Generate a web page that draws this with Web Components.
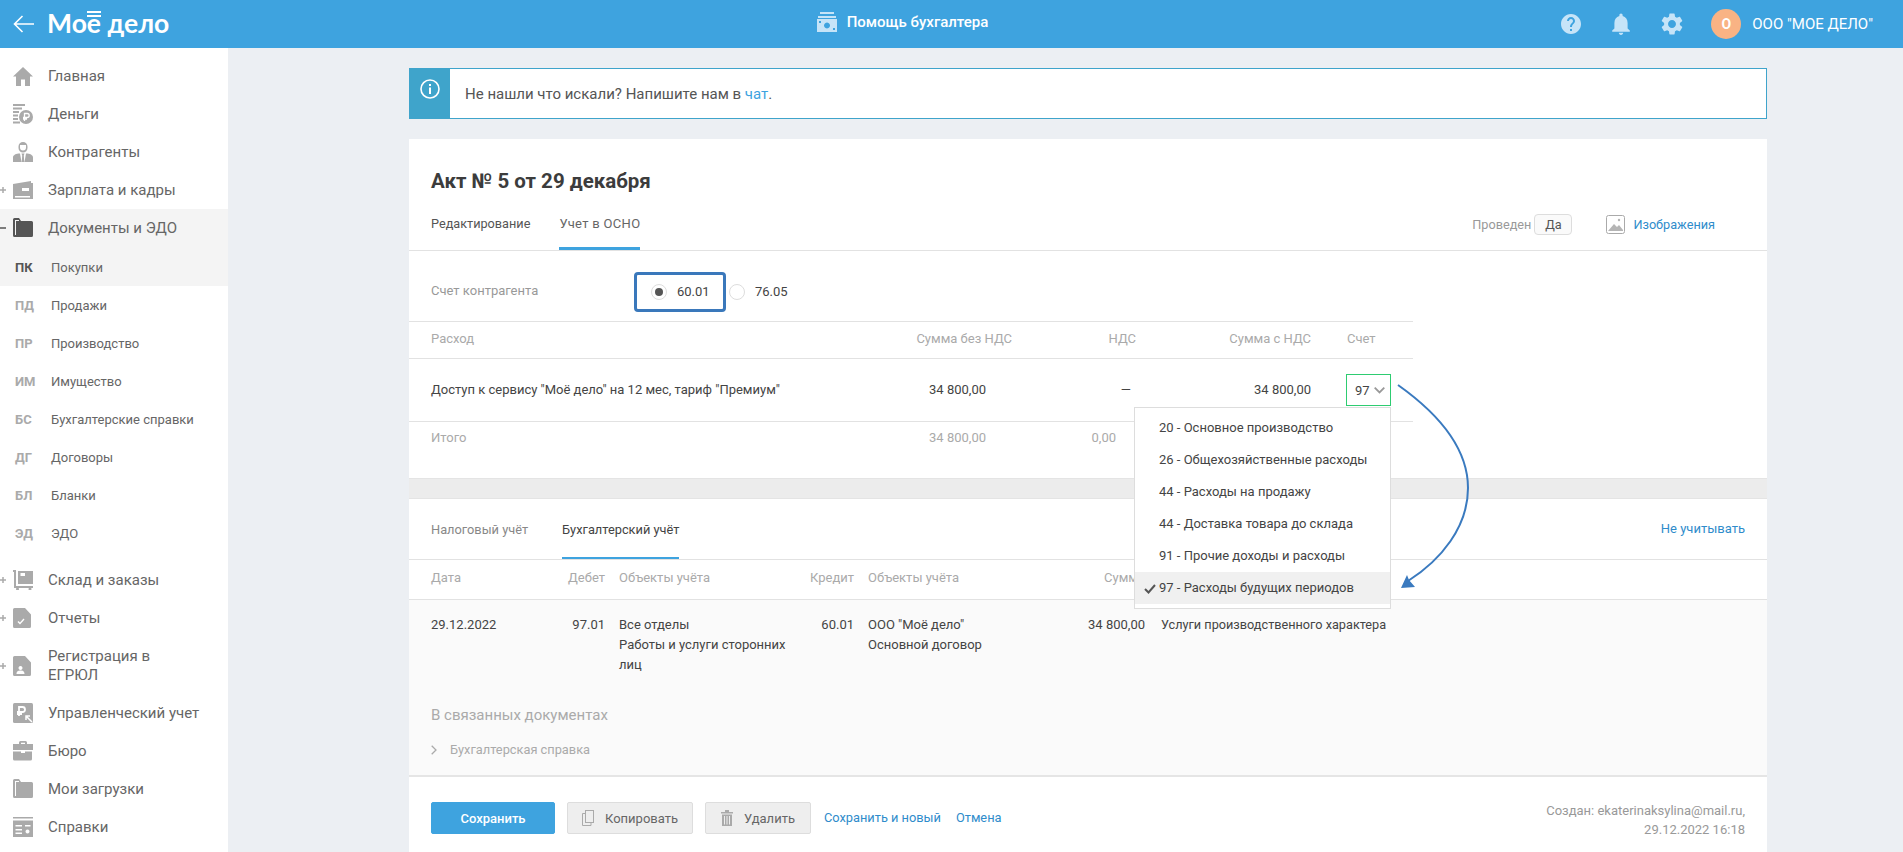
<!DOCTYPE html>
<html lang="ru">
<head>
<meta charset="utf-8">
<title>Акт № 5</title>
<style>
    html, body { margin: 0; height: 100%; overflow: hidden; }
    body { background: #eceff3; font-family: Roboto, "Liberation Sans", sans-serif; }
</style>
</head>
<body>
<app-shell>
    <app-header slot="header"></app-header>
    <side-nav slot="nav">
        <nav-item icon="home">Главная</nav-item>
        <nav-item icon="money">Деньги</nav-item>
        <nav-item icon="person">Контрагенты</nav-item>
        <nav-item icon="wallet" sign="plus">Зарплата и кадры</nav-item>
        <nav-item icon="folder" sign="minus" active>Документы и ЭДО</nav-item>
        <nav-sub abbr="ПК" active style="padding-top:1px">Покупки</nav-sub>
        <nav-sub abbr="ПД">Продажи</nav-sub>
        <nav-sub abbr="ПР">Производство</nav-sub>
        <nav-sub abbr="ИМ">Имущество</nav-sub>
        <nav-sub abbr="БС">Бухгалтерские справки</nav-sub>
        <nav-sub abbr="ДГ">Договоры</nav-sub>
        <nav-sub abbr="БЛ">Бланки</nav-sub>
        <nav-sub abbr="ЭД">ЭДО</nav-sub>
        <nav-item icon="cart" sign="plus" style="margin-top:9px">Склад и заказы</nav-item>
        <nav-item icon="report" sign="plus">Отчеты</nav-item>
        <nav-item icon="reg" sign="plus">Регистрация в<br>ЕГРЮЛ</nav-item>
        <nav-item icon="mgmt">Управленческий учет</nav-item>
        <nav-item icon="bureau">Бюро</nav-item>
        <nav-item icon="folder">Мои загрузки</nav-item>
        <nav-item icon="refs">Справки</nav-item>
    </side-nav>
    <info-alert>Не нашли что искали? Напишите нам в <a>чат</a>.</info-alert>
    <act-card>
        <act-head></act-head>
        <account-row></account-row>
        <expense-table></expense-table>
        <posting-table></posting-table>
        <act-footer></act-footer>
    </act-card>
</app-shell>

<script>
const navIcons = {
    home: '<path d="M10 1 20 10.5H17V20H12V13.5H8V20H3V10.5H0Z"/>',
    money: '<path d="M0 0H12V2H0ZM0 3.5H9V5.5H0ZM0 7H6V9H0ZM0 10.500H5V12.500H0ZM0 14H5V16H0ZM0 17.500H7V19.500H0Z"/><circle cx="13" cy="13" r="7"/><path d="M11.500 17V9.500H14.200A2 2 0 0 1 14.200 13.500H10M10 15H14" fill="none" stroke="#fff" stroke-width="1.300"/>',
    person: '<path d="M10 0A4.500 4.500 0 0 1 14.500 4.500V6A4.500 4.500 0 0 1 5.500 6V4.500A4.500 4.500 0 0 1 10 0ZM7 3V5.500A3 3 0 0 0 13 5.500V3Z" fill-rule="evenodd"/><path d="M0 20V15.500C0 13 3 11.500 7 11.500L8.500 20ZM20 20V15.500C20 13 17 11.500 13 11.500L11.500 20ZM8.500 11.500H11.500L10.800 13.500 11.300 20H8.700L9.200 13.500Z"/>',
    wallet: '<path d="M0 3 18 0V2H20V18H0ZM9 7V10H16V7Z M2 15V16.500H17V15Z" fill-rule="evenodd" transform="translate(0 1)"/>',
    folder: '<path d="M0 1.500Q0 0 1.500 0H6L8 3H18.500Q20 3 20 4.500V17.500Q20 19 18.500 19H1.500Q0 19 0 17.500ZM2 17H3V3H6V2H2Z" fill-rule="evenodd"/>',
    cart: '<path d="M0 0H3V16H20V18H1V2H0Z"/><path d="M5 1H20V14H5ZM7.500 3V6H12V3Z" fill-rule="evenodd"/><circle cx="4.500" cy="19" r="1.500"/><circle cx="17" cy="19" r="1.500"/>',
    report: '<path d="M1.500 0H12L18 6.500V18.500Q18 20 16.500 20H1.500Q0 20 0 18.500V1.500Q0 0 1.500 0ZM4.500 14 7 16.500 11.500 11.500 10.500 10.500 7 14.500 5.500 13Z" fill-rule="evenodd"/>',
    reg: '<path d="M1.500 0H12L18 6.500V18.500Q18 20 16.500 20H1.500Q0 20 0 18.500V1.500Q0 0 1.500 0ZM7.500 10A2 2 0 1 0 7.510 10ZM3.500 18H11.500C11.500 15 9.500 14.500 7.500 14.500S3.500 15 3.500 18Z" fill-rule="evenodd"/>',
    mgmt: '<path d="M1.500 0H18.500Q20 0 20 1.500V18.500Q20 20 18.500 20H1.500Q0 20 0 18.500V1.500Q0 0 1.500 0Z"/><path d="M6 13V4H9.500A2.500 2.500 0 0 1 9.500 9H4M4 11H9" fill="none" stroke="#fff" stroke-width="1.800"/><path d="M19 19 13.500 13.500M13 17V13H17" fill="none" stroke="#fff" stroke-width="1.500"/>',
    bureau: '<path d="M6 3V1.500Q6 0 7.500 0H12.500Q14 0 14 1.500V3H20V9H0V3ZM8 1.800V3H12V1.800Z" fill-rule="evenodd"/><path d="M0 10.500H8V12H12V10.500H19V18Q19 19.500 17.500 19.500H1.500Q0 19.500 0 18Z"/>',
    refs: '<path d="M0 0H20V1.500H0ZM0 3.500H20V20H0ZM2.500 8V9.500H9V8ZM12 8V9.500H17.500V8ZM2.500 12V13.500H9V12ZM2.500 15.500V17H9V15.500ZM14.500 12.500A2 2 0 1 0 14.510 12.500Z" fill-rule="evenodd"/>'
};

const components = [
    {
        name: 'app-shell',
        class: class AppShell extends HTMLElement {
            constructor() {
                super();
                this.attachShadow({ mode: 'open' });
            }
            connectedCallback() {
                this.shadowRoot.innerHTML = `
                    <style>
                        :host {
                            display: grid;
                            grid-template-columns: 228px 1fr;
                            grid-template-rows: 48px 1fr;
                            height: 100vh;
                        }
                        ::slotted([slot="header"]) { grid-column: 1 / 3; }
                        main {
                            padding: 20px 136px 0 181px;
                            display: flex;
                            flex-direction: column;
                            gap: 20px;
                        }
                    </style>
                    <slot name="header"></slot>
                    <slot name="nav"></slot>
                    <main><slot></slot></main>
                `;
            }
        }
    },
    {
        name: 'app-header',
        class: class AppHeader extends HTMLElement {
            constructor() {
                super();
                this.attachShadow({ mode: 'open' });
            }
            connectedCallback() {
                this.shadowRoot.innerHTML = `
                    <style>
                        :host {
                            display: grid;
                            grid-template-columns: 1fr auto 1fr;
                            align-items: center;
                            height: 48px;
                            background: #3ea3df;
                            color: #fff;
                        }
                        .left { display: flex; align-items: center; padding-left: 13px; gap: 13px; }
                        .logo {
                            font-family: Lato, sans-serif;
                            font-size: 26.500px;
                            font-weight: 700;
                            line-height: 34px;
                            margin-top: -2px;
                            white-space: nowrap;
                        }
                        .yo { position: relative; display: inline-block; }
                        .yo::after {
                            content: '';
                            position: absolute;
                            left: 0;
                            right: 0;
                            top: 5px;
                            height: 8px;
                            box-sizing: border-box;
                            background: #3ea3df;
                            border-top: 2px solid #fff;
                            background-image: linear-gradient(#fff, #fff);
                            background-size: 100% 2px;
                            background-position: 0 2px;
                            background-repeat: no-repeat;
                        }
                        .center { display: flex; align-items: center; gap: 10px; font-size: 15px; font-weight: 500; margin: -4px 98px 0 0; }
                        .right { display: flex; align-items: center; justify-content: flex-end; padding-right: 30px; }
                        .right svg { fill: #c6e4f8; display: block; }
                        .avatar {
                            width: 30px;
                            height: 30px;
                            border-radius: 50%;
                            background: #f9b384;
                            font-size: 14px;
                            font-weight: 700;
                            line-height: 30px;
                            text-align: center;
                            margin-left: 28px;
                        }
                        .org { font-size: 15px; margin-left: 11px; white-space: nowrap; }
                    </style>
                    <div class="left">
                        <svg width="21" height="18" viewBox="0 0 21 18" fill="none" stroke="#fff" stroke-width="1.600"><path d="M21 9H2M9.500 1 1.500 9 9.500 17"/></svg>
                        <span class="logo">Мо<span class="yo">ё</span> дело</span>
                    </div>
                    <div class="center">
                        <svg width="20" height="20" viewBox="0 0 20 20" fill="#c6e4f8"><path d="M3 0H17V2H3ZM1 4H19V6H1Z"/><path d="M0 7H20V20H0ZM2 9V11H4V9ZM16 16V18H18V16ZM10 10.500A3 3 0 1 0 10.010 10.500Z" fill-rule="evenodd"/></svg>
                        <span>Помощь бухгалтера</span>
                    </div>
                    <div class="right">
                        <svg width="20" height="20" viewBox="2 2 20 20" style="margin-right:30px"><path d="M12 2C6.480 2 2 6.480 2 12s4.480 10 10 10 10-4.480 10-10S17.520 2 12 2zm1 17h-2v-2h2v2zm2.070-7.750l-.9.920C13.450 12.900 13 13.500 13 15h-2v-.5c0-1.100.45-2.100 1.170-2.830l1.240-1.260c.37-.36.59-.86.59-1.410 0-1.100-.9-2-2-2s-2 .9-2 2H8c0-2.210 1.790-4 4-4s4 1.790 4 4c0 .88-.36 1.680-.93 2.250z"/></svg>
                        <svg width="20" height="22" viewBox="3 2 18 20" style="margin-right:30px"><path d="M12 22c1.100 0 2-.9 2-2h-4c0 1.100.9 2 2 2zm6-6v-5c0-3.070-1.630-5.640-4.500-6.320V4c0-.83-.67-1.500-1.500-1.500s-1.500.67-1.500 1.500v.68C7.640 5.360 6 7.920 6 11v5l-2 2v1h16v-1l-2-2z"/></svg>
                        <svg width="22" height="22" viewBox="2 2 20 20"><path d="M19.140 12.940c.04-.3.06-.61.06-.94 0-.32-.02-.64-.07-.94l2.030-1.580c.18-.14.23-.41.12-.61l-1.920-3.320c-.12-.22-.37-.29-.59-.22l-2.390.96c-.5-.38-1.030-.7-1.620-.94l-.36-2.540c-.04-.24-.24-.41-.48-.41h-3.840c-.24 0-.43.17-.47.41l-.36 2.540c-.59.24-1.130.57-1.620.94l-2.390-.96c-.22-.08-.47 0-.59.22L2.740 8.870c-.12.21-.08.47.12.61l2.030 1.580c-.05.3-.09.63-.09.94s.02.64.07.94l-2.030 1.580c-.18.14-.23.41-.12.61l1.920 3.320c.12.22.37.29.59.22l2.390-.96c.5.38 1.030.7 1.620.94l.36 2.540c.05.24.24.41.48.41h3.840c.24 0 .44-.17.47-.41l.36-2.540c.59-.24 1.130-.56 1.620-.94l2.390.96c.22.08.47 0 .59-.22l1.920-3.320c.12-.22.07-.47-.12-.61l-2.010-1.580zM12 15.600c-1.980 0-3.600-1.620-3.600-3.600s1.620-3.600 3.600-3.600 3.600 1.620 3.600 3.600-1.620 3.600-3.600 3.600z"/></svg>
                        <div class="avatar">О</div>
                        <span class="org">ООО "МОЕ ДЕЛО"</span>
                    </div>
                `;
            }
        }
    },
    {
        name: 'side-nav',
        class: class SideNav extends HTMLElement {
            constructor() {
                super();
                this.attachShadow({ mode: 'open' });
            }
            connectedCallback() {
                this.shadowRoot.innerHTML = `
                    <style>
                        :host {
                            display: block;
                            background: #fff;
                            padding-top: 9px;
                            overflow: hidden;
                        }
                    </style>
                    <slot></slot>
                `;
            }
        }
    },
    {
        name: 'nav-item',
        class: class NavItem extends HTMLElement {
            constructor() {
                super();
                this.attachShadow({ mode: 'open' });
            }
            connectedCallback() {
                const sign = this.getAttribute('sign');
                const active = this.hasAttribute('active');
                const signMark = sign === 'plus'
                    ? '<path d="M0 3H6M3 0V6"/>'
                    : sign === 'minus' ? '<path d="M0 3H6"/>' : '';
                this.shadowRoot.innerHTML = `
                    <style>
                        :host {
                            display: flex;
                            align-items: center;
                            padding: 9.500px 0;
                            font-size: 15px;
                            line-height: 19px;
                            color: #666;
                            background: ${active ? '#f4f4f4' : 'transparent'};
                        }
                        .sign { width: 6px; height: 6px; margin-right: 7px; fill: none; stroke: ${active ? '#555' : '#aaa'}; stroke-width: 1.500; flex: none; }
                        .icon { width: 20px; height: 20px; margin: -1px 15px -1px 0; fill: ${active ? '#555' : '#aaa'}; flex: none; }
                    </style>
                    <svg class="sign" viewBox="0 0 6 6">${signMark}</svg>
                    <svg class="icon" viewBox="0 0 20 20">${navIcons[this.getAttribute('icon')]}</svg>
                    <span><slot></slot></span>
                `;
            }
        }
    },
    {
        name: 'nav-sub',
        class: class NavSub extends HTMLElement {
            constructor() {
                super();
                this.attachShadow({ mode: 'open' });
            }
            connectedCallback() {
                const active = this.hasAttribute('active');
                this.shadowRoot.innerHTML = `
                    <style>
                        :host {
                            display: flex;
                            align-items: center;
                            height: 38px;
                            padding-left: 15px;
                            font-size: 13px;
                            color: #666;
                            background: ${active ? '#f4f4f4' : 'transparent'};
                        }
                        b { width: 36px; font-size: 13px; font-weight: 700; color: ${active ? '#555' : '#aaa'}; flex: none; }
                    </style>
                    <b>${this.getAttribute('abbr')}</b>
                    <span><slot></slot></span>
                `;
            }
        }
    },
    {
        name: 'info-alert',
        class: class InfoAlert extends HTMLElement {
            constructor() {
                super();
                this.attachShadow({ mode: 'open' });
            }
            connectedCallback() {
                this.shadowRoot.innerHTML = `
                    <style>
                        :host {
                            display: flex;
                            height: 51px;
                            box-sizing: border-box;
                            background: #fff;
                            border: 1px solid #3fa4cb;
                            font-size: 15px;
                            color: #555;
                            align-items: center;
                        }
                        .mark {
                            align-self: stretch;
                            width: 40px;
                            background: #3fa4cb;
                            display: flex;
                            align-items: flex-start;
                            justify-content: center;
                            padding-top: 10px;
                            box-sizing: border-box;
                        }
                        .text { margin-left: 15px; }
                        ::slotted(a) { color: #3ea3df; }
                    </style>
                    <div class="mark">
                        <svg width="20" height="20" viewBox="0 0 20 20" fill="none" stroke="#fff" stroke-width="1.600"><circle cx="10" cy="10" r="9"/><path d="M10 8.500V15" stroke-width="2"/><path d="M10 5V7" stroke-width="2"/></svg>
                    </div>
                    <span class="text"><slot></slot></span>
                `;
            }
        }
    },
    {
        name: 'act-card',
        class: class ActCard extends HTMLElement {
            constructor() {
                super();
                this.attachShadow({ mode: 'open' });
            }
            connectedCallback() {
                this.shadowRoot.innerHTML = `
                    <style>
                        :host {
                            display: block;
                            background: #fff;
                            color: #444;
                            font-size: 13px;
                        }
                    </style>
                    <slot></slot>
                `;
            }
        }
    },
    {
        name: 'act-head',
        class: class ActHead extends HTMLElement {
            constructor() {
                super();
                this.attachShadow({ mode: 'open' });
            }
            connectedCallback() {
                this.shadowRoot.innerHTML = `
                    <style>
                        :host { display: block; border-bottom: 1px solid #e2e2e2; padding: 30px 22px 0; }
                        h1 { margin: 0; font-size: 20.500px; line-height: 24px; font-weight: 700; color: #3c3c3c; }
                        .tabs { display: flex; align-items: flex-start; height: 57px; }
                        .tab { padding: 21px 0 13px; line-height: 20px; border-bottom: 3px solid transparent; color: #555; }
                        .tab.edit { font-size: 12.700px; margin-right: 29px; }
                        .tab.on { border-bottom-color: #3ea3df; color: #666; letter-spacing: .3px; }
                        .side { margin-left: auto; display: flex; align-items: center; padding-top: 21px; font-size: 12.700px; }
                        .state { color: #999; margin-right: 3px; }
                        .badge { border: 1px solid #ddd; border-radius: 4px; background: #fafafa; width: 38px; height: 21px; box-sizing: border-box; line-height: 19px; text-align: center; color: #555; margin-right: 34px; }
                        .pic { width: 19px; height: 19px; margin-right: 8px; }
                        a { color: #2f8ccb; margin-right: 30px; }
                    </style>
                    <h1>Акт № 5 от 29 декабря</h1>
                    <div class="tabs">
                        <div class="tab edit">Редактирование</div>
                        <div class="tab on">Учет в ОСНО</div>
                        <div class="side">
                            <span class="state">Проведен</span>
                            <span class="badge">Да</span>
                            <svg class="pic" viewBox="0 0 19 19"><rect x=".5" y=".5" width="18" height="18" rx="2" fill="none" stroke="#aaa"/><path d="M2 16 8 9 11 12 13 10 17 15V16Z" fill="#b5b5b5"/><circle cx="13" cy="5" r="1.200" fill="#b5b5b5"/></svg>
                            <a>Изображения</a>
                        </div>
                    </div>
                `;
            }
        }
    },
    {
        name: 'account-row',
        class: class AccountRow extends HTMLElement {
            constructor() {
                super();
                this.attachShadow({ mode: 'open' });
            }
            connectedCallback() {
                this.shadowRoot.innerHTML = `
                    <style>
                        :host {
                            display: flex;
                            align-items: center;
                            padding: 21px 0 9px 22px;
                            width: 1004px;
                            box-sizing: border-box;
                            border-bottom: 1px solid #e2e2e2;
                            height: 71px;
                        }
                        .label { width: 203px; color: #999; margin-top: -4px; }
                        .focus {
                            width: 92px;
                            height: 40px;
                            box-sizing: border-box;
                            border: 3px solid #3a78bb;
                            border-radius: 4px;
                            display: flex;
                            align-items: center;
                            padding: 0 0 1px 14px;
                        }
                        .radio {
                            width: 16px;
                            height: 16px;
                            box-sizing: border-box;
                            border: 1px solid #ddd;
                            border-radius: 50%;
                            margin-right: 10px;
                            display: flex;
                            align-items: center;
                            justify-content: center;
                            background: #fff;
                        }
                        .radio.on::after { content: ''; width: 8px; height: 8px; border-radius: 50%; background: #555; }
                        .other { display: flex; align-items: center; margin: -1px 0 0 3px; }
                    </style>
                    <span class="label">Счет контрагента</span>
                    <div class="focus"><span class="radio on"></span>60.01</div>
                    <div class="other"><span class="radio"></span>76.05</div>
                `;
            }
        }
    },
    {
        name: 'expense-table',
        class: class ExpenseTable extends HTMLElement {
            constructor() {
                super();
                this.attachShadow({ mode: 'open' });
            }
            connectedCallback() {
                this.shadowRoot.innerHTML = `
                    <style>
                        :host { display: block; }
                        .row {
                            display: grid;
                            grid-template-columns: 461px 120px 124px 175px 80px;
                            width: 1004px;
                            box-sizing: border-box;
                            padding-left: 22px;
                            align-items: center;
                        }
                        .num { text-align: right; }
                        .sum { text-align: right; padding-right: 26px; }
                        .head { height: 37px; color: #aaa; border-bottom: 1px solid #e2e2e2; padding-bottom: 4px; }
                        .body { height: 63px; border-bottom: 1px solid #e2e2e2; position: relative; }
                        .body > span { margin-top: -2px; }
                        .cell-end { justify-self: end; }
                        .total { height: 56px; color: #aaa; align-items: start; padding-top: 6px; line-height: 20px; }
                        .band { height: 19px; background: #ececec; border-top: 1px solid #e4e4e4; border-bottom: 1px solid #e4e4e4; }
                        .acc { padding-left: 36px; }
                    </style>
                    <div class="row head">
                        <span>Расход</span>
                        <span class="num">Сумма без НДС</span>
                        <span class="num">НДС</span>
                        <span class="num">Сумма с НДС</span>
                        <span class="acc">Счет</span>
                    </div>
                    <div class="row body">
                        <span>Доступ к сервису "Моё дело" на 12 мес, тариф "Премиум"</span>
                        <span class="sum">34 800,00</span>
                        <span class="num" style="padding-right:5px">—</span>
                        <span class="num">34 800,00</span>
                        <account-select class="cell-end" value="97"></account-select>
                    </div>
                    <div class="row total">
                        <span>Итого</span>
                        <span class="sum">34 800,00</span>
                        <span class="num" style="padding-right:20px">0,00</span>
                    </div>
                    <div class="band"></div>
                `;
            }
        }
    },
    {
        name: 'account-select',
        class: class AccountSelect extends HTMLElement {
            constructor() {
                super();
                this.attachShadow({ mode: 'open' });
            }
            connectedCallback() {
                const options = [
                    '20 - Основное производство',
                    '26 - Общехозяйственные расходы',
                    '44 - Расходы на продажу',
                    '44 - Доставка товара до склада',
                    '91 - Прочие доходы и расходы',
                    '97 - Расходы будущих периодов'
                ];
                const value = this.getAttribute('value');
                this.shadowRoot.innerHTML = `
                    <style>
                        :host { display: block; position: relative; width: 45px; height: 32px; }
                        .box {
                            box-sizing: border-box;
                            height: 32px;
                            border: 1px solid #2ecc71;
                            display: flex;
                            align-items: center;
                            padding-left: 8px;
                            gap: 4px;
                            background: #fff;
                        }
                        .menu {
                            position: absolute;
                            z-index: 10;
                            right: 0;
                            top: 33px;
                            width: 257px;
                            box-sizing: border-box;
                            background: #fff;
                            border: 1px solid #ddd;
                            padding: 4px 0 4px;
                            font-size: 13px;
                            color: #444;
                        }
                        .opt { height: 32px; line-height: 32px; padding-left: 24px; position: relative; white-space: nowrap; }
                        .opt.on { background: #f0f0f0; }
                        .check { position: absolute; left: 9px; top: 12px; }
                        .arrow { position: absolute; z-index: 11; left: 50px; top: 8px; overflow: visible; }
                    </style>
                    <div class="box">${value}
                        <svg width="11" height="7" viewBox="0 0 11 7" fill="none" stroke="#999" stroke-width="1.800"><path d="M.7 .7 5.500 5.500 10.300 .7"/></svg>
                    </div>
                    <div class="menu">
                        ${options.map(option => `<div class="opt ${option.startsWith(value) ? 'on' : ''}">${option.startsWith(value) ? '<svg class="check" width="12" height="10" viewBox="0 0 12 10" fill="none" stroke="#555" stroke-width="2"><path d="M1 5 4.500 8.500 11 1"/></svg>' : ''}${option}</div>`).join('')}
                    </div>
                    <svg class="arrow" width="76" height="210" viewBox="0 0 76 210">
                        <path d="M2 3C40 30 72 65 72 106 72 145 45 178 12 199" fill="none" stroke="#3a7abf" stroke-width="2"/>
                        <path d="M5 206 11 193 13 198 19 205Z" fill="#3a7abf"/>
                    </svg>
                `;
            }
        }
    },
    {
        name: 'posting-table',
        class: class PostingTable extends HTMLElement {
            constructor() {
                super();
                this.attachShadow({ mode: 'open' });
            }
            connectedCallback() {
                this.shadowRoot.innerHTML = `
                    <style>
                        :host { display: block; }
                        .tabs {
                            display: flex;
                            height: 61px;
                            box-sizing: border-box;
                            padding: 0 22px;
                            border-bottom: 1px solid #e2e2e2;
                        }
                        .tab { padding-top: 21px; line-height: 20px; margin-right: 34px; box-sizing: border-box; color: #888; height: 60px; border-bottom: 2px solid transparent; font-size: 12.800px; }
                        .tab.on { color: #444; border-bottom-color: #3ea3df; }
                        .skip { margin: 20px 0 0 auto; line-height: 20px; color: #2f8ccb; }
                        .grid {
                            display: grid;
                            grid-template-columns: 110px 50px 176px 45px 172px 91px auto;
                            column-gap: 14px;
                            padding: 0 22px;
                        }
                        .num { text-align: right; }
                        .head { color: #aaa; align-items: start; padding-top: 8px; box-sizing: border-box; line-height: 20px; border-bottom: 1px solid #e2e2e2; height: 40px; }
                        .rows { background: #fafafa; border-bottom: 2px solid #e5e5e5; height: 177px; box-sizing: border-box; }
                        .body { padding-top: 15px; line-height: 20px; height: 85px; box-sizing: border-box; }
                        .body .last { padding-left: 2px; white-space: nowrap; font-size: 12.700px; }
                        h3 { margin: 0; padding: 0 22px; font-size: 15px; font-weight: 400; color: #aaa; line-height: 20px; margin-top: 20px; }
                        .link { padding: 0 22px; margin-top: 15px; display: flex; align-items: center; color: #aaa; line-height: 20px; font-size: 12.800px; }
                        .link svg { margin-right: 13px; }
                    </style>
                    <div class="tabs">
                        <div class="tab">Налоговый учёт</div>
                        <div class="tab on">Бухгалтерский учёт</div>
                        <div class="skip">Не учитывать</div>
                    </div>
                    <div class="grid head">
                        <span>Дата</span>
                        <span class="num">Дебет</span>
                        <span>Объекты учёта</span>
                        <span class="num">Кредит</span>
                        <span>Объекты учёта</span>
                        <span class="num">Сумма</span>
                    </div>
                    <div class="rows">
                        <div class="grid body">
                            <span>29.12.2022</span>
                            <span class="num">97.01</span>
                            <span>Все отделы<br>Работы и услуги сторонних лиц</span>
                            <span class="num">60.01</span>
                            <span>ООО "Моё дело"<br>Основной договор</span>
                            <span class="num">34 800,00</span>
                            <span class="last">Услуги производственного характера</span>
                        </div>
                        <h3>В связанных документах</h3>
                        <div class="link">
                            <svg width="6" height="10" viewBox="0 0 6 10" fill="none" stroke="#aaa" stroke-width="1.300"><path d="M.7 .7 5 5 .7 9.300"/></svg>
                            Бухгалтерская справка
                        </div>
                    </div>
                `;
            }
        }
    },
    {
        name: 'act-footer',
        class: class ActFooter extends HTMLElement {
            constructor() {
                super();
                this.attachShadow({ mode: 'open' });
            }
            connectedCallback() {
                this.shadowRoot.innerHTML = `
                    <style>
                        :host { display: flex; align-items: flex-start; padding: 25px 22px 20px; }
                        .btn {
                            height: 32px;
                            box-sizing: border-box;
                            border-radius: 2px;
                            display: flex;
                            align-items: center;
                            justify-content: center;
                            gap: 11px;
                            margin-right: 12px;
                            border: 1px solid #ddd;
                            background: #eee;
                            color: #666;
                        }
                        .save { width: 124px; background: #3ea3df; border-color: #3ea3df; color: #fff; font-weight: 500; }
                        .copy { width: 126px; }
                        .del { width: 106px; }
                        a { color: #2f8ccb; line-height: 32px; margin-left: 1px; margin-right: 14px; font-size: 12.800px; }
                        .meta { margin-left: auto; text-align: right; color: #999; line-height: 19px; margin-top: -1px; }
                    </style>
                    <div class="btn save">Сохранить</div>
                    <div class="btn copy">
                        <svg width="12" height="16" viewBox="0 0 12 16" fill="none" stroke="#aaa"><rect x="3.500" y=".5" width="8" height="12"/><path d="M3 3.500H.5V15.500H9V13"/></svg>
                        Копировать
                    </div>
                    <div class="btn del">
                        <svg width="12" height="16" viewBox="0 0 12 16" fill="#aaa"><path d="M0 2H4V0H8V2H12V3.500H0ZM1 4.500H11V16H1ZM3 6V14.500H4V6ZM5.500 6V14.500H6.500V6ZM8 6V14.500H9V6Z" fill-rule="evenodd"/></svg>
                        Удалить
                    </div>
                    <a>Сохранить и новый</a>
                    <a>Отмена</a>
                    <div class="meta">Создан: ekaterinaksylina@mail.ru,<br>29.12.2022 16:18</div>
                `;
            }
        }
    }
];

components.forEach(component => {
    customElements.define(component.name, component.class);
});
</script>
</body>
</html>
